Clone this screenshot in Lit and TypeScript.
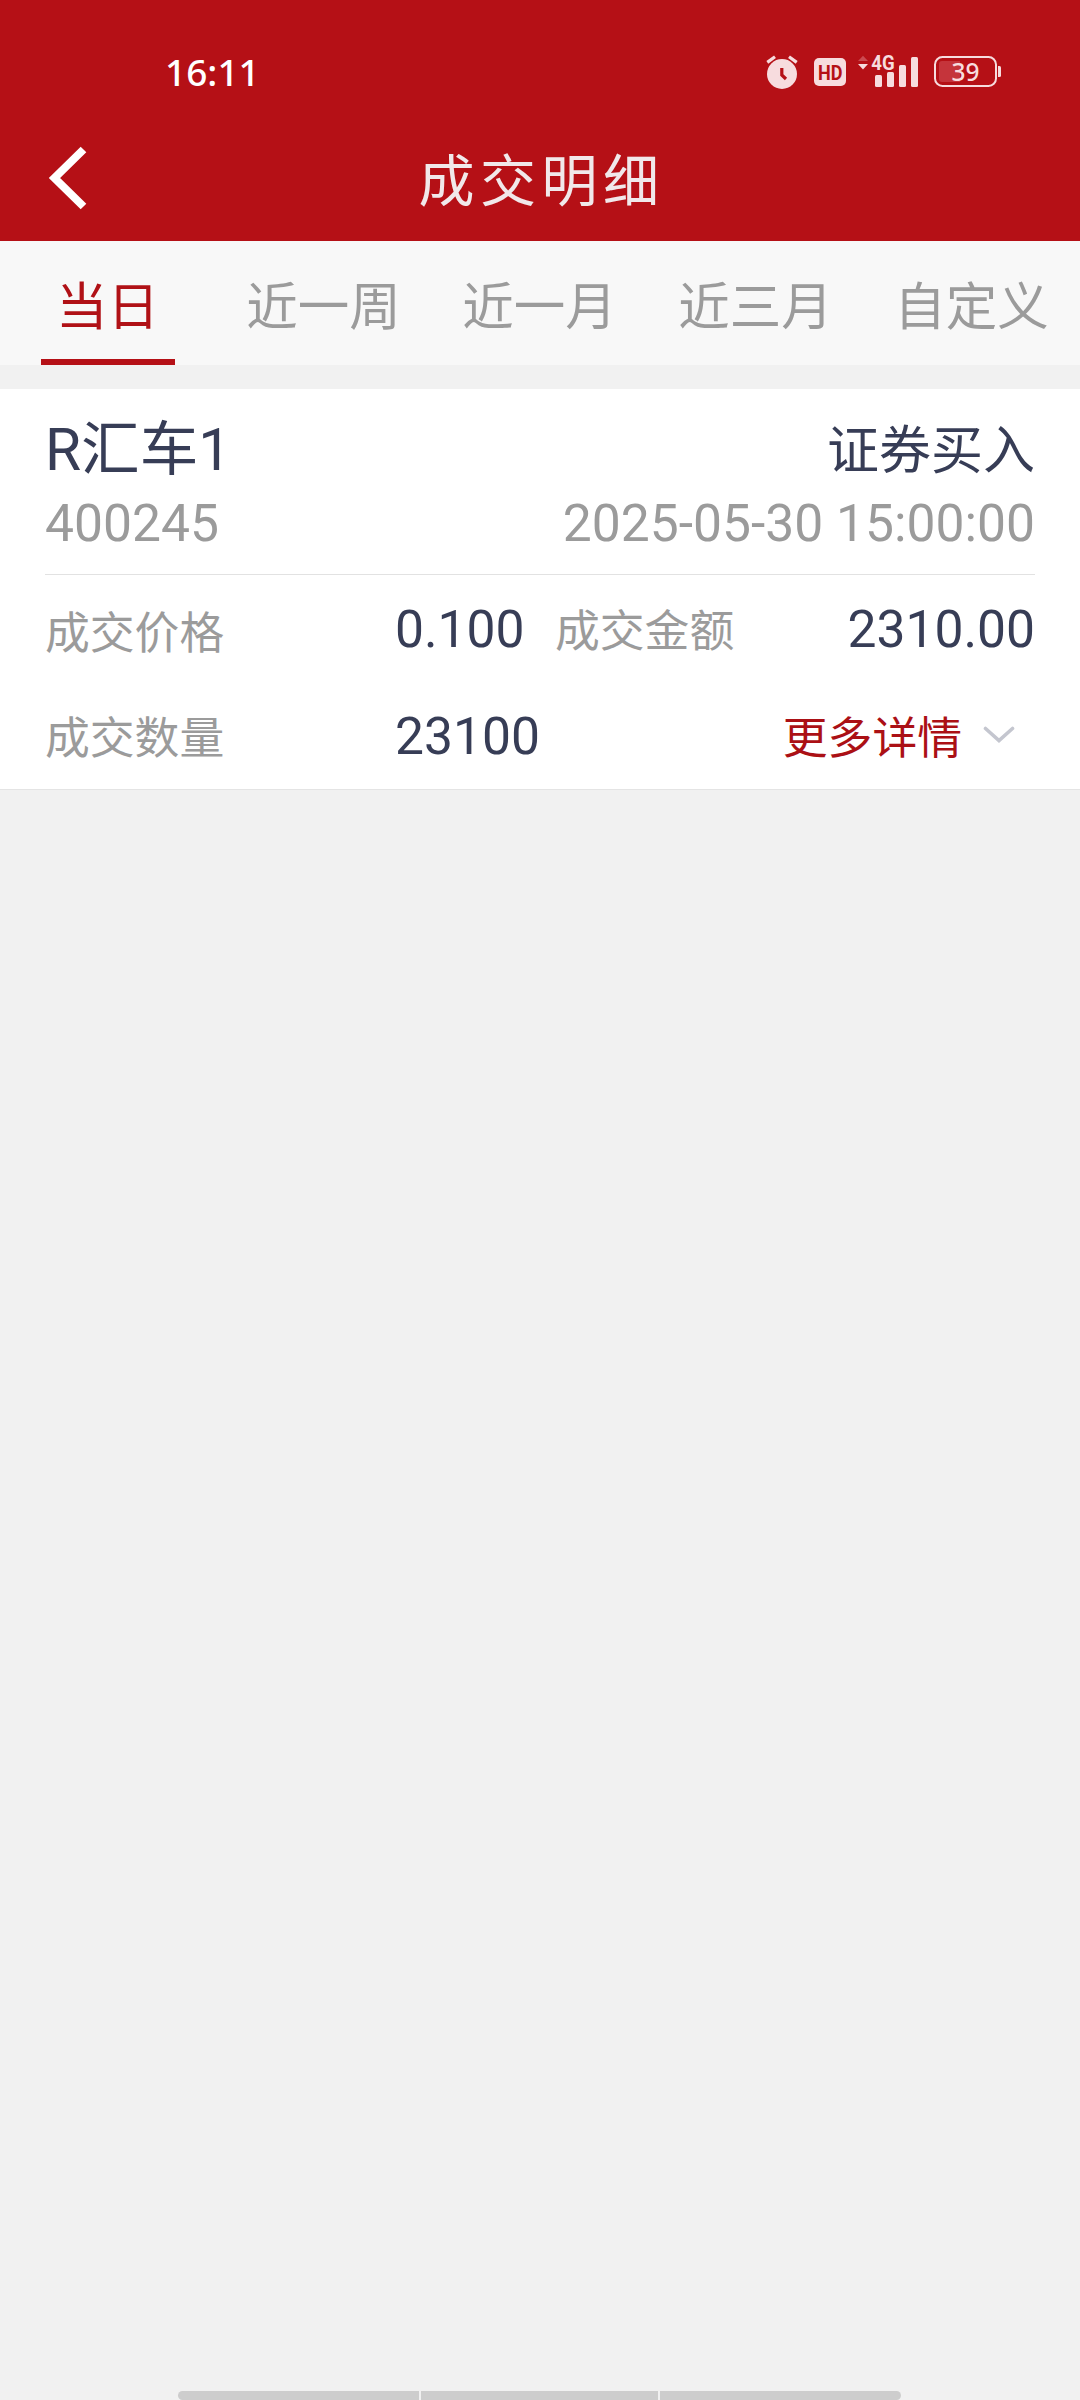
import { LitElement, html, css } from "lit";
import { customElement, property, state } from "lit/decorators.js";
import { classMap } from "lit/directives/class-map.js";

@customElement("status-bar")
class StatusBar extends LitElement {
  static styles = css`
    :host { display: flex; justify-content: space-between; align-items: center; box-sizing: border-box; height: 106px; padding: 37px 79px 0 165px; color: #fff; }
    .time { font: 500 37px/44px "Noto Sans", sans-serif; }
    .icons { display: flex; align-items: center; height: 34px; }
    svg { display: block; overflow: visible; }
    .alarm { margin-right: 16px; }
    .hd { margin-right: 12px; }
    .signal { margin-right: 16px; }
    .net { font: 700 21px Roboto, sans-serif; }
    .pct { font: 500 25.5px "Noto Sans", sans-serif; }
  `;
  render() {
    return html`
      <span class="time">16:11</span>
      <div class="icons">
        <svg class="alarm" width="32" height="34" viewBox="0 0 32 34">
          <circle cx="16" cy="19" r="15" fill="#f7dcde" />
          <path d="M1.3 7.4 9 1.8M30.7 7.4 23 1.8" stroke="#f7dcde" stroke-width="3.2" fill="none" />
          <path d="M15.8 13v7l4.2 4" stroke="#b51016" stroke-width="3.2" fill="none" />
        </svg>
        <svg class="hd" width="32" height="28" viewBox="0 0 32 28">
          <rect width="32" height="28" rx="5" fill="#f7dcde" />
          <text class="net" x="4" y="21.6" textLength="24.5" lengthAdjust="spacingAndGlyphs" fill="#b51016">HD</text>
        </svg>
        <svg class="signal" width="60" height="34" viewBox="0 0 60 34">
          <path d="M0 6 5 .8 10 6z" fill="#cb4a50" />
          <path d="M0 9h10l-5 5.4z" fill="#f7dcde" />
          <text class="net" x="13.2" y="15.4" textLength="23.4" lengthAdjust="spacingAndGlyphs" fill="#f7dcde">4G</text>
          <g fill="#f7dcde">
            <rect x="17" y="20" width="7" height="12" rx="1.5" />
            <rect x="29" y="17" width="7" height="15" rx="1.5" />
            <rect x="41" y="10" width="7" height="22" rx="1.5" />
            <rect x="53" y="2" width="7" height="30" rx="1.5" />
          </g>
        </svg>
        <svg width="67" height="31" viewBox="0 0 67 31">
          <rect x="1" y="1" width="61" height="29" rx="7.5" fill="none" stroke="#f7dcde" stroke-width="2" />
          <path d="M8 5H26V26H8a3 3 0 0 1-3-3V8a3 3 0 0 1 3-3z" fill="#c5343b" />
          <path d="M64 10h1.5q1.5 0 1.5 1.5v8q0 1.5-1.5 1.5H64z" fill="#f7dcde" />
          <text class="pct" x="17.6" y="24.6" textLength="28" lengthAdjust="spacingAndGlyphs" fill="#f7dcde">39</text>
        </svg>
      </div>
    `;
  }
}

@customElement("title-bar")
class TitleBar extends LitElement {
  @property() heading = "";
  static styles = css`
    :host { display: grid; grid-template-columns: 100px 1fr 100px; align-items: start; height: 135px; }
    .back { display: block; margin: 40px 0 0 48px; }
    .heading { margin: 0; padding: 31px 0 0 3px; text-align: center; font: 400 56px/80px "Noto Sans CJK SC", sans-serif; letter-spacing: 5.5px; color: #f1e8ea; }
  `;
  render() {
    return html`
      <svg class="back" width="40" height="64" viewBox="0 0 40 64">
        <path d="M35.5 3.5 6.5 32l29 28.5" fill="none" stroke="#fff" stroke-width="8" />
      </svg>
      <h1 class="heading">${this.heading}</h1>
    `;
  }
}

@customElement("range-tabs")
class RangeTabs extends LitElement {
  @state() private active = 0;
  private labels = ["当日", "近一周", "近一月", "近三月", "自定义"];
  static styles = css`
    :host { display: grid; grid-template-columns: repeat(5, 1fr); height: 124px; background: #f8f8f8; }
    .tab { display: flex; flex-direction: column; align-items: center; justify-content: space-between; padding: 24px 1px 0 0; color: #9b9b9b; font: 400 51.5px/76px "Noto Sans CJK SC", sans-serif; white-space: nowrap; }
    .line { width: 134px; height: 6px; }
    .active { color: #b01116; }
    .active .line { background: #b51016; }
  `;
  render() {
    return this.labels.map(
      (label, i) => html`
        <div class=${classMap({ tab: true, active: i === this.active })} @click=${() => (this.active = i)}>
          <span>${label}</span><i class="line"></i>
        </div>
      `
    );
  }
}

@customElement("trade-card")
class TradeCard extends LitElement {
  static styles = css`
    :host { display: block; box-sizing: border-box; height: 401px; padding: 25px 45px 0; background: #fff; border-bottom: 1px solid #e4e4e4; color: #373d56; font: 400 51.6px/72px Roboto, "Noto Sans CJK SC", sans-serif; }
    .line { display: flex; justify-content: space-between; height: 74px; white-space: nowrap; }
    .name { font-size: 58.6px; }
    .side { font: 400 52px/66px "Noto Sans CJK SC", sans-serif; }
    .muted { color: #9b9b9b; }
    .head { height: 161px; border-bottom: 1px solid #e2e2e2; box-sizing: border-box; }
    .row { display: grid; grid-template-columns: 350px 160px 1fr auto; align-items: center; height: 110px; white-space: nowrap; }
    .last { height: 104px; grid-template-columns: 350px 1fr auto; }
    .label { font: 400 44.8px/64px "Noto Sans CJK SC", sans-serif; color: #9b9b9b; }
    .raised { padding-bottom: 5px; }
    .more { display: flex; align-items: center; gap: 21px; padding-right: 20px; color: #ab1015; }
    .up { padding-bottom: 4px; }
  `;
  render() {
    return html`
      <div class="head">
        <div class="line"><span class="name">R汇车1</span><span class="side">证券买入</span></div>
        <div class="line muted"><span>400245</span><span>2025-05-30 15:00:00</span></div>
      </div>
      <div class="row">
        <span class="label">成交价格</span><span>0.100</span>
        <span class="label raised">成交金额</span><span>2310.00</span>
      </div>
      <div class="row last">
        <span class="label up">成交数量</span><span>23100</span>
        <span class="label more up">
          更多详情
          <svg width="32" height="18" viewBox="0 0 32 18">
            <path d="M2.5 2.5 16 14.5 29.5 2.5" fill="none" stroke="#c4c6cf" stroke-width="3.6" stroke-linecap="round" />
          </svg>
        </span>
      </div>
    `;
  }
}

@customElement("app-root")
class AppRoot extends LitElement {
  static styles = css`
    :host { display: flex; flex-direction: column; box-sizing: border-box; width: 1080px; height: 2400px; overflow: hidden; background: #f1f1f1; }
    .top { background: #b51016; height: 241px; }
    .card { margin-top: 24px; }
    .nav { display: flex; gap: 2px; margin-top: auto; margin-left: 178px; height: 9px; }
    .seg { width: 241px; background: #cdcdcd; }
    .mid { width: 237px; }
    .first { border-radius: 5px 0 0 5px; }
    .end { border-radius: 0 5px 5px 0; }
  `;
  render() {
    return html`
      <header class="top">
        <status-bar></status-bar>
        <title-bar heading="成交明细"></title-bar>
      </header>
      <range-tabs></range-tabs>
      <trade-card class="card"></trade-card>
      <div class="nav"><i class="seg first"></i><i class="seg mid"></i><i class="seg end"></i></div>
    `;
  }
}
